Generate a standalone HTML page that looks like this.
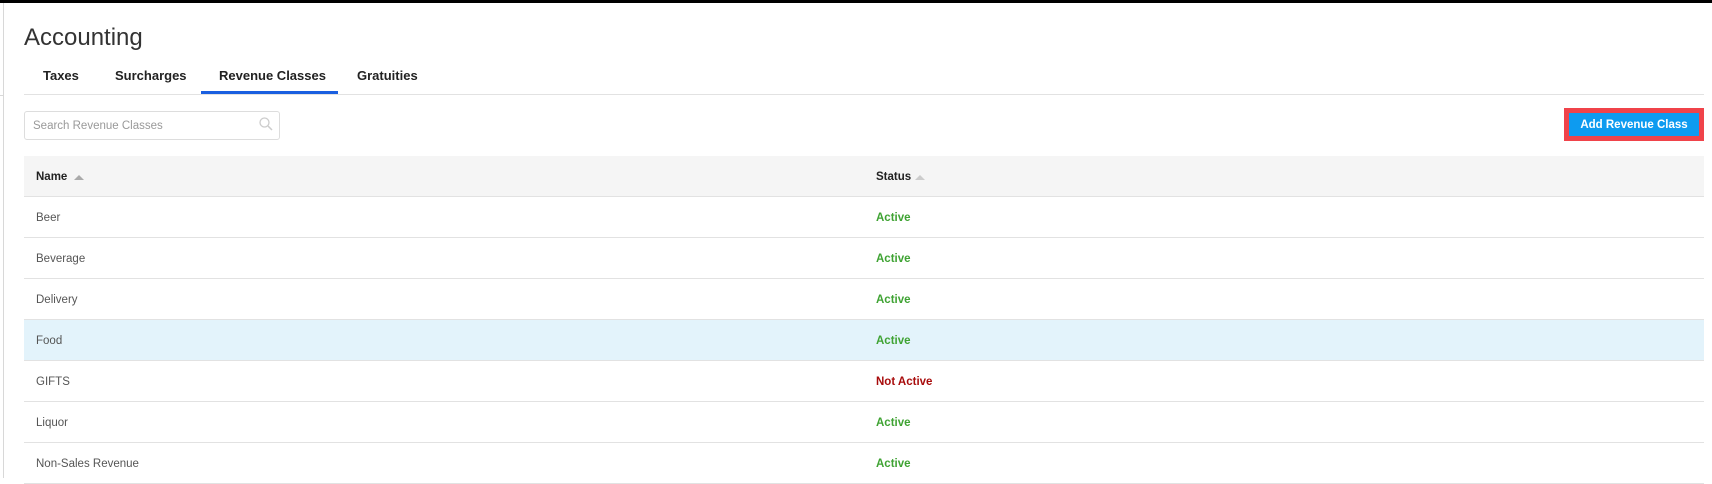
<!DOCTYPE html>
<html><head><style>
*{margin:0;padding:0;box-sizing:border-box}
body{width:1712px;height:478px;overflow:hidden;background:#fff;font-family:"Liberation Sans",sans-serif;position:relative;color:#333}
.abs{position:absolute}
.tab{position:absolute;top:68px;font-size:13px;font-weight:bold;color:#222}
.row{position:absolute;left:24px;width:1680px;height:41px;border-bottom:1px solid #e2e2e2;font-size:11.5px}
.row .n{position:absolute;left:12px;top:15px;color:#555}
.row .s{position:absolute;left:852px;top:15px;font-weight:bold;color:#3fa333}
</style></head><body>
<div class="abs" style="left:0;top:0;width:1712px;height:3px;background:#000"></div>
<div class="abs" style="left:3px;top:3px;width:1px;height:475px;background:#d8d8d8"></div>
<div class="abs" style="left:0;top:95px;width:3px;height:1px;background:#d8d8d8"></div>
<div class="abs" style="left:24px;top:24px;font-size:24px;color:#333">Accounting</div>
<div class="tab" style="left:43px">Taxes</div>
<div class="tab" style="left:115px">Surcharges</div>
<div class="tab" style="left:219px">Revenue Classes</div>
<div class="tab" style="left:357px">Gratuities</div>
<div class="abs" style="left:24px;top:94px;width:1680px;height:1px;background:#e2e2e2"></div>
<div class="abs" style="left:201px;top:91px;width:137px;height:3px;background:#1a5fe0"></div>
<div class="abs" style="left:24px;top:111px;width:256px;height:29px;border:1px solid #ddd;border-radius:3px"></div>
<div class="abs" style="left:33px;top:120px;font-size:11.5px;color:#999">Search Revenue Classes</div>
<svg class="abs" style="left:258px;top:116px" width="16" height="16" viewBox="0 0 16 16"><circle cx="6.5" cy="6.5" r="4.5" fill="none" stroke="#ccc" stroke-width="1.3"/><path d="M10 10l4 4" stroke="#ccc" stroke-width="1.5"/></svg>
<div class="abs" style="left:1564px;top:108px;width:140px;height:33px;background:#f0434a"></div>
<div class="abs" style="left:1569px;top:113px;width:130px;height:23px;background:#0d9bf0;color:#fff;font-size:11.5px;font-weight:bold;text-align:center;line-height:25px">Add Revenue Class</div>
<div class="abs" style="left:24px;top:156px;width:1680px;height:41px;background:#f5f5f5;border-bottom:1px solid #e2e2e2;font-size:11.5px;font-weight:bold;color:#222">
<span class="abs" style="left:12px;top:15px">Name</span>
<svg class="abs" style="left:50px;top:18px" width="10" height="6"><path d="M0 6L5 1L10 6Z" fill="#aaa"/></svg>
<span class="abs" style="left:852px;top:15px">Status</span>
<svg class="abs" style="left:891px;top:18px" width="10" height="6"><path d="M0 6L5 1L10 6Z" fill="#ccc"/></svg>
</div>
<div class="row" style="top:197px"><span class="n">Beer</span><span class="s">Active</span></div>
<div class="row" style="top:238px"><span class="n">Beverage</span><span class="s">Active</span></div>
<div class="row" style="top:279px"><span class="n">Delivery</span><span class="s">Active</span></div>
<div class="row" style="top:320px;background:#e3f3fb"><span class="n">Food</span><span class="s">Active</span></div>
<div class="row" style="top:361px"><span class="n">GIFTS</span><span class="s" style="color:#a80c0c">Not Active</span></div>
<div class="row" style="top:402px"><span class="n">Liquor</span><span class="s">Active</span></div>
<div class="row" style="top:443px"><span class="n">Non-Sales Revenue</span><span class="s">Active</span></div>
</body></html>
